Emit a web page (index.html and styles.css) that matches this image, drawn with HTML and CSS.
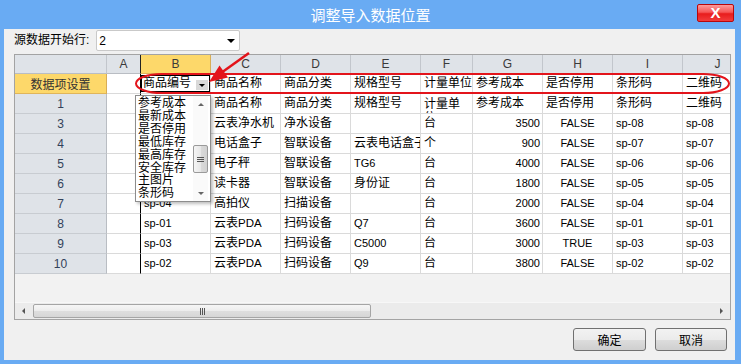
FILE: index.html
```html
<!DOCTYPE html>
<html lang="zh-CN">
<head>
<meta charset="utf-8">
<title>调整导入数据位置</title>
<link rel="stylesheet" href="styles.css">
</head>
<body>
<div class="window">
  <div class="titlebar">
    <div class="title">调整导入数据位置</div>
    <div class="close">X</div>
  </div>
  <div class="panel">
    <div class="toolbar">
      <span class="label">源数据开始行:</span>
      <div class="combo"><span class="combo-val">2</span><span class="caret"></span></div>
    </div>
    <div class="grid">
      <div class="sheet">
        <table>
          <colgroup>
            <col class="w-rh"><col class="w-a"><col class="w-70"><col class="w-70"><col class="w-70"><col class="w-70"><col class="w-f"><col class="w-70"><col class="w-70"><col class="w-70"><col class="w-70">
          </colgroup>
          <tr class="hdr">
            <th class="corner"></th><th class="a">A</th><th class="sel">B</th><th>C</th><th>D</th><th>E</th><th>F</th><th>G</th><th>H</th><th>I</th><th>J</th>
          </tr>
          <tr>
            <th class="rh sel">数据项设置</th><td class="a"></td>
            <td class="edit"><div class="editor"><span>商品编号</span><span class="edit-btn"><span class="caret small"></span></span></div></td>
            <td>商品名称</td><td>商品分类</td><td>规格型号</td><td>计量单位</td><td>参考成本</td><td>是否停用</td><td>条形码</td><td>二维码</td>
          </tr>
          <tr>
            <th class="rh">1</th><td class="a"></td><td>商品编号</td>
            <td>商品名称</td><td>商品分类</td><td>规格型号</td><td class="wrap"><div class="wrapbox">计量单位</div></td><td>参考成本</td><td>是否停用</td><td>条形码</td><td>二维码</td>
          </tr>
          <tr>
            <th class="rh">3</th><td class="a"></td><td class="l">sp-08</td>
            <td>云表净水机</td><td>净水设备</td><td></td><td>台</td><td class="l r">3500</td><td class="l c">FALSE</td><td class="l">sp-08</td><td class="l">sp-08</td>
          </tr>
          <tr>
            <th class="rh">4</th><td class="a"></td><td class="l">sp-07</td>
            <td>电话盒子</td><td>智联设备</td><td>云表电话盒子</td><td>个</td><td class="l r">900</td><td class="l c">FALSE</td><td class="l">sp-07</td><td class="l">sp-07</td>
          </tr>
          <tr>
            <th class="rh">5</th><td class="a"></td><td class="l">sp-06</td>
            <td>电子秤</td><td>智联设备</td><td class="l">TG6</td><td>台</td><td class="l r">4000</td><td class="l c">FALSE</td><td class="l">sp-06</td><td class="l">sp-06</td>
          </tr>
          <tr>
            <th class="rh">6</th><td class="a"></td><td class="l">sp-05</td>
            <td>读卡器</td><td>智联设备</td><td>身份证</td><td>台</td><td class="l r">1800</td><td class="l c">FALSE</td><td class="l">sp-05</td><td class="l">sp-05</td>
          </tr>
          <tr>
            <th class="rh">7</th><td class="a"></td><td class="l">sp-04</td>
            <td>高拍仪</td><td>扫描设备</td><td></td><td>台</td><td class="l r">2000</td><td class="l c">FALSE</td><td class="l">sp-04</td><td class="l">sp-04</td>
          </tr>
          <tr>
            <th class="rh">8</th><td class="a"></td><td class="l">sp-01</td>
            <td>云表<span class="lat">PDA</span></td><td>扫码设备</td><td class="l">Q7</td><td>台</td><td class="l r">3600</td><td class="l c">FALSE</td><td class="l">sp-01</td><td class="l">sp-01</td>
          </tr>
          <tr>
            <th class="rh">9</th><td class="a"></td><td class="l">sp-03</td>
            <td>云表<span class="lat">PDA</span></td><td>扫码设备</td><td class="l">C5000</td><td>台</td><td class="l r">3000</td><td class="l c">TRUE</td><td class="l">sp-03</td><td class="l">sp-03</td>
          </tr>
          <tr>
            <th class="rh">10</th><td class="a"></td><td class="l">sp-02</td>
            <td>云表<span class="lat">PDA</span></td><td>扫码设备</td><td class="l">Q9</td><td>台</td><td class="l r">3800</td><td class="l c">FALSE</td><td class="l">sp-02</td><td class="l">sp-02</td>
          </tr>
        </table>
      </div>
      <div class="hscroll">
        <div class="hs-btn"><span class="arr-left"></span></div>
        <div class="hs-track"><div class="hs-thumb"><span class="grip-v"></span></div></div>
        <div class="hs-btn"><span class="arr-right"></span></div>
      </div>

      <div class="dropdown">
        <ul class="dd-items">
          <li>参考成本</li>
          <li>最新成本</li>
          <li>是否停用</li>
          <li>最低库存</li>
          <li>最高库存</li>
          <li>安全库存</li>
          <li>主图片</li>
          <li>条形码</li>
        </ul>
        <div class="vscroll">
          <div class="vs-btn"><span class="arr-up"></span></div>
          <div class="vs-track"><div class="vs-thumb"><span class="grip-h"></span></div></div>
          <div class="vs-btn"><span class="arr-down"></span></div>
        </div>
      </div>

      <svg class="annot" width="717" height="60" viewBox="0 0 717 60">
        <rect x="121" y="19" width="593" height="19" rx="26" ry="9.5" fill="none" stroke="#e3141b" stroke-width="2"/>
        <line x1="234" y1="-2" x2="206" y2="18" stroke="#e3141b" stroke-width="2.5"/>
        <polygon points="194,27 213,22.5 204.5,10.5" fill="#e3141b"/>
      </svg>
    </div>
    <div class="actions">
      <button class="btn ok">确定</button>
      <button class="btn">取消</button>
    </div>
  </div>
</div>
</body>
</html>
```
FILE: styles.css
```css
* { box-sizing: border-box; }
html, body {
  margin: 0;
  padding: 0;
}
body {
  width: 741px;
  height: 364px;
  overflow: hidden;
  background: #69abf3;
  font-family: "Liberation Sans", "Noto Sans CJK SC", sans-serif;
  font-size: 12px;
  color: #000;
}
.window {
  width: 741px;
  height: 364px;
}
.titlebar {
  display: grid;
  grid-template-columns: 1fr auto 1fr;
  height: 29px;
}
.title {
  grid-column: 2;
  color: #fff;
  font-family: "Noto Sans CJK SC", sans-serif;
  font-size: 15px;
  line-height: 29px;
}
.close {
  grid-column: 3;
  justify-self: end;
  margin: 4px 7px 0 0;
  width: 37px;
  height: 18px;
  border: 1px solid #b8070b;
  border-radius: 2px;
  background: linear-gradient(#ff9a9a, #f65656 45%, #e81c1c 55%, #f23c3c);
  color: #fff;
  font-weight: bold;
  font-size: 15px;
  line-height: 16px;
  text-align: center;
}
.panel {
  margin-left: 4px;
  width: 731px;
  height: 331px;
  background: #f0f0f0;
  padding: 1px 8px 0 10px;
  display: flex;
  flex-direction: column;
}
.toolbar {
  display: flex;
  align-items: center;
  gap: 7px;
  height: 21px;
}
.label {
  font-size: 12px;
  line-height: 21px;
}
.combo {
  width: 144px;
  height: 21px;
  background: #fff;
  border: 1px solid #c9c9c9;
  border-radius: 2px;
  display: flex;
  align-items: center;
  justify-content: space-between;
  padding: 0 4px 0 2px;
}
.caret {
  display: inline-block;
  width: 0;
  height: 0;
  border-left: 4px solid transparent;
  border-right: 4px solid transparent;
  border-top: 4px solid #000;
}
.caret.small {
  border-left-width: 3px;
  border-right-width: 3px;
  border-top-width: 3px;
}

/* grid */
.grid {
  margin-top: 3px;
  width: 717px;
  height: 266px;
  border: 1px solid #a3a3a3;
  position: relative;
  display: flex;
  flex-direction: column;
  background: #f2f2f2;
  flex: none;
}
.sheet {
  flex: 1;
  overflow: hidden;
}
table {
  table-layout: fixed;
  border-collapse: separate;
  border-spacing: 0;
  width: 738px;
  background: #fff;
}
.w-rh { width: 92px; }
.w-a { width: 34px; }
.w-70 { width: 70px; }
.w-f { width: 52px; }
tr { height: 20px; }
tr.hdr { height: 19px; }
td {
  border-right: 1px solid #dadada;
  border-bottom: 1px solid #dadada;
  padding: 0 3px;
  white-space: nowrap;
  overflow: hidden;
  font-size: 12px;
  line-height: 19px;
  vertical-align: middle;
}
td.l, .lat {
  font-family: "Liberation Sans", sans-serif;
  font-size: 11px;
}
.lat { font-size: 11.5px; }
td.r { text-align: right; padding-right: 2px; }
td.c { text-align: center; }
td.a { border-right-color: #000; }
th {
  font-weight: normal;
  background: #dfe3e8;
  color: #3a3a3a;
  border-right: 1px solid #c2c6cc;
  border-bottom: 1px solid #b9bdc3;
  text-align: center;
  font-size: 12px;
  padding: 0;
  white-space: nowrap;
  overflow: hidden;
}
th.a { border-right-color: #222; }
th.sel {
  background: #fdd86a;
  border-bottom-color: #e0b55a;
  border-right-color: #d8ad55;
}
th.rh {
  color: #32425a;
  border-right: 1px solid #b9bdc3;
  border-bottom: 1px solid #c8ccd1;
  font-size: 12px;
}
th.rh.sel {
  color: #333;
  border-right-color: #d8ad55;
  border-bottom-color: #e0b55a;
}
td.edit { padding: 0; }
.editor {
  height: 17px;
  border: 1px solid #000;
  display: flex;
  align-items: center;
  padding-left: 1px;
  line-height: 15px;
}
.edit-btn {
  margin-left: auto;
  margin-right: 1px;
  margin-top: 3px;
  width: 12px;
  height: 10px;
  background: #d9d9d9;
  display: flex;
  align-items: center;
  justify-content: center;
}
td.wrap { white-space: normal; }
.wrapbox {
  height: 19px;
  overflow: hidden;
  line-height: 14px;
  padding-top: 3px;
  word-break: break-all;
  width: 44px;
}

/* horizontal scrollbar */
.hscroll {
  height: 17px;
  display: flex;
  background: #ebebeb;
  border-top: 1px solid #f7f7f7;
  flex: none;
}
.hs-btn {
  width: 17px;
  display: flex;
  align-items: center;
  justify-content: center;
}
.hs-track {
  flex: 1;
  padding: 1px 0 1px 1px;
}
.hs-thumb {
  width: 338px;
  height: 100%;
  border: 1px solid #a5a5a5;
  border-radius: 2px;
  background: linear-gradient(#f6f6f6, #ececec 50%, #dedede 51%, #d6d6d6);
  display: flex;
  align-items: center;
  justify-content: center;
}
.grip-v {
  width: 5px;
  height: 7px;
  border-left: 1px solid #555;
  border-right: 1px solid #555;
  position: relative;
}
.grip-v::after {
  content: "";
  position: absolute;
  left: 1px;
  top: 0;
  width: 1px;
  height: 7px;
  background: #555;
}
.arr-left, .arr-right, .arr-up, .arr-down {
  width: 0;
  height: 0;
  display: inline-block;
}
.arr-left {
  border-top: 3px solid transparent;
  border-bottom: 3px solid transparent;
  border-right: 3px solid #555;
}
.arr-right {
  border-top: 3px solid transparent;
  border-bottom: 3px solid transparent;
  border-left: 3px solid #555;
}
.arr-up {
  border-left: 3px solid transparent;
  border-right: 3px solid transparent;
  border-bottom: 3px solid #666;
}
.arr-down {
  border-left: 3px solid transparent;
  border-right: 3px solid transparent;
  border-top: 3px solid #666;
}

/* dropdown */
.dropdown {
  position: absolute;
  left: 120px;
  top: 40px;
  width: 76px;
  height: 107px;
  background: #fff;
  border: 1px solid #8d8d8d;
  box-shadow: 2px 2px 3px rgba(0, 0, 0, 0.25);
  display: flex;
}
.dd-items {
  list-style: none;
  margin: 0;
  padding: 0 0 0 2px;
  flex: 1;
  font-family: "Noto Sans CJK SC", sans-serif;
  font-size: 12px;
  line-height: 12.9px;
  overflow: hidden;
  white-space: nowrap;
}
.vscroll {
  width: 15px;
  margin-right: 2px;
  display: flex;
  flex-direction: column;
  background: #fafafa;
}
.vs-btn {
  height: 16px;
  display: flex;
  align-items: center;
  justify-content: center;
}
.vs-track {
  flex: 1;
  padding-top: 33px;
}
.vs-thumb {
  height: 28px;
  border: 1px solid #9a9a9a;
  border-radius: 2px;
  background: linear-gradient(90deg, #f5f5f5, #e8e8e8 50%, #dadada 51%, #d2d2d2);
  display: flex;
  align-items: center;
  justify-content: center;
}
.grip-h {
  width: 7px;
  height: 5px;
  border-top: 1px solid #555;
  border-bottom: 1px solid #555;
  position: relative;
}
.grip-h::after {
  content: "";
  position: absolute;
  left: 0;
  top: 1px;
  width: 7px;
  height: 1px;
  background: #555;
}
.annot {
  position: absolute;
  left: 0;
  top: 0;
  overflow: visible;
  pointer-events: none;
}

/* buttons */
.actions {
  margin-top: 8px;
  display: flex;
  justify-content: flex-end;
  gap: 9px;
}
.btn {
  width: 72px;
  height: 23px;
  border: 1px solid #707070;
  border-radius: 3px;
  background: linear-gradient(#f2f2f2, #ebebeb 50%, #dddddd 51%, #cfcfcf);
  font-family: "Noto Sans CJK SC", sans-serif;
  font-size: 12px;
  color: #000;
  padding: 0;
}
.btn.ok { width: 73px; }
```
